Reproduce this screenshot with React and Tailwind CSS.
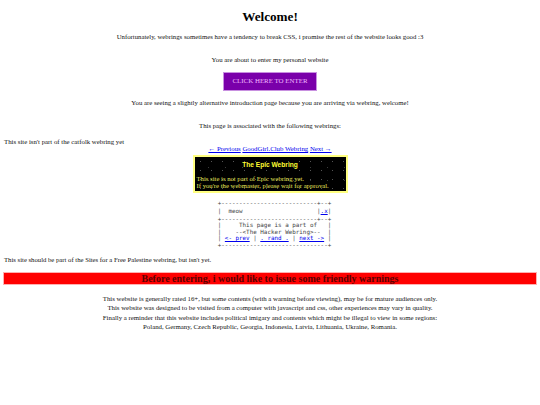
import React from "react";

const serif = { fontFamily: '"Liberation Serif", "Times New Roman", serif' };

export default function App() {
  const A = ({ children }) => (
    <a href="#" className="text-[#0000ee] underline">
      {children}
    </a>
  );
  return (
    <div className="w-[540px] h-[405px] bg-white text-[#111] overflow-hidden" style={serif}>
      <h1 className="mt-[8px] text-center text-[13.2px] leading-[18px] font-bold text-black">Welcome!</h1>
      <p className="mt-[6px] text-center text-[6.75px] leading-[10px]">
        Unfortunately, webrings sometimes have a tendency to break CSS, i promise the rest of the website looks good :3
      </p>
      <p className="mt-[13px] text-center text-[6.75px] leading-[10px]">You are about to enter my personal website</p>
      <div className="mt-[7px] flex justify-center">
        <div className="w-[94px] h-[19px] bg-[#7a00aa] border border-[#c890e0] flex items-center justify-center text-[6.9px] text-[#f0b8ff]">
          CLICK HERE TO ENTER
        </div>
      </div>
      <p className="mt-[7px] text-center text-[6.75px] leading-[10px]">
        You are seeing a slightly alternative introduction page because you are arriving via webring, welcome!
      </p>
      <p className="mt-[13px] text-center text-[6.75px] leading-[10px]">This page is associated with the following webrings:</p>
      <p className="mt-[7px] pl-[4px] text-[6.8px] leading-[7px]">This site isn't part of the catfolk webring yet</p>
      <p className="text-center text-[6.8px] leading-[7px] mt-[0px]">
        <A>← Previous</A> <A>GoodGirl.Club Webring</A> <A>Next →</A>
      </p>
      <div className="mt-[3px] flex justify-center">
        <div className="w-[155px] h-[38px] border-2 border-[#ffff80] bg-black bg-[radial-gradient(circle,#555_0.3px,transparent_0.6px),radial-gradient(circle,#3a3a3a_0.3px,transparent_0.6px)] bg-[length:11px_9px,17px_13px] bg-[position:0_0,5px_4px] px-[2px]">
          <div
            className="text-center text-[6.6px] leading-[8px] font-bold text-[#ffff33] mt-[4px]"
            style={{ fontFamily: '"Liberation Sans", Arial, sans-serif' }}
          >
            The Epic Webring
          </div>
          <div className="mt-[6px] text-[6.7px] leading-[7px] text-[#e6e65a]">
            This site is not part of Epic webring yet.
            <br />
            If you're the webmaster, please wait for approval.
          </div>
        </div>
      </div>
      <div className="mt-[7px] flex justify-center pl-[9px]">
        <pre
          className="text-[5.9px] leading-[6.5px] text-[#444]"
          style={{ fontFamily: '"DejaVu Sans Mono", "Liberation Mono", monospace' }}
        >
          {"+---------------------------+--+\n"}
          <span className="inline-block leading-[9px]">
            {"|  meow                     |"}
            <A>.x</A>
            {"|"}
          </span>
          {"\n+---------------------------+--+\n"}
          {"|     This page is a part of   |\n"}
          {"|    --<The Hacker Webring>--  |\n"}
          {"| "}
          <A>{"<- prev"}</A>
          {" | "}
          <A>{". rand ."}</A>
          {" | "}
          <A>{"next ->"}</A>
          {" |\n"}
          {"+------------------------------+"}
        </pre>
      </div>
      <p className="mt-[7px] pl-[4px] text-[6.7px] leading-[10px]">
        This site should be part of the Sites for a Free Palestine webring, but isn't yet.
      </p>
      <div className="mt-[7px] mx-[3px] h-[13px] bg-[#ff0000] border border-[#ffb0b0] flex items-center justify-center text-[10px] font-bold text-[#5a0000]">
        Before entering, i would like to issue some friendly warnings
      </div>
      <div className="mt-[9px] text-center text-[6.8px] leading-[9.4px]">
        <p>This website is generally rated 16+, but some contents (with a warning before viewing), may be for mature audiences only.</p>
        <p>This website was designed to be visited from a computer with javascript and css, other experiences may vary in quality.</p>
        <p>Finally a reminder that this website includes political imigary and contents which might be illegal to view in some regions:</p>
        <p>Poland, Germany, Czech Republic, Georgia, Indonesia, Latvia, Lithuania, Ukraine, Romania.</p>
      </div>
    </div>
  );
}
